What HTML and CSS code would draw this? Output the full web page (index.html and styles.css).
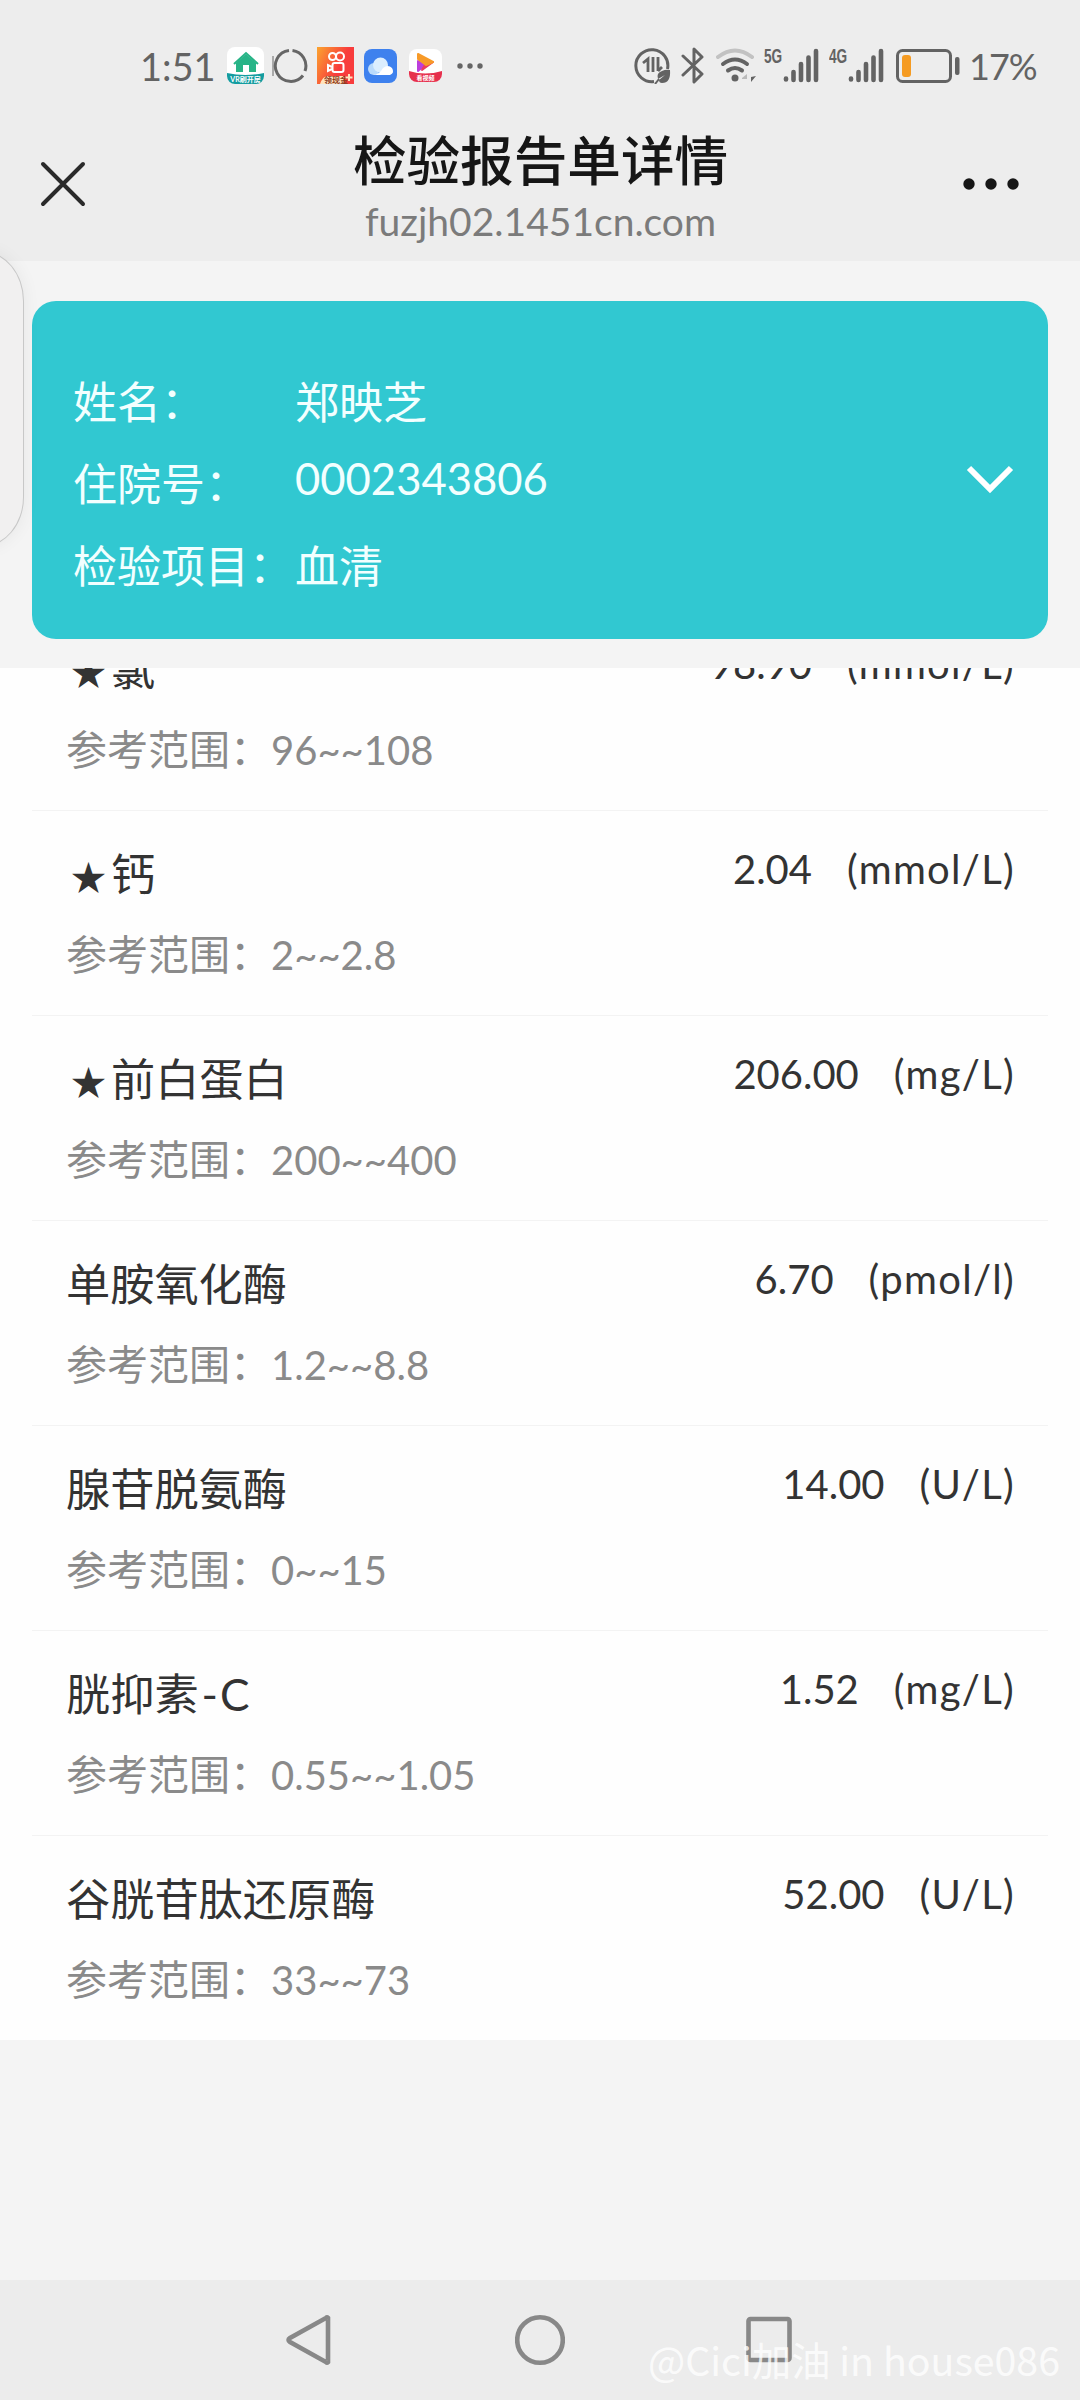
FILE: index.html
```html
<!DOCTYPE html>
<html lang="zh-CN">
<head>
    <meta charset="UTF-8">
    <meta name="viewport" content="width=device-width, initial-scale=1.0">
    <title>检验报告单详情</title>
    <link rel="stylesheet" href="styles.css">
</head>
<body>
    <div class="status-bar">
        <div class="status-left">
            <span class="time">1:51</span>
            <svg class="app-house" width="37" height="37" viewBox="0 0 37 37">
                <defs><clipPath id="house-clip"><rect width="37" height="37" rx="8"/></clipPath></defs>
                <g clip-path="url(#house-clip)">
                    <rect width="37" height="37" fill="#fff"/>
                    <path d="M0 26q18 4 37 0v11H0z" fill="#149c9f"/>
                    <path d="M9 16v9h7v-7h6v7h7v-9l-10-9z" fill="#28b487"/>
                    <path d="M7 17L19 6l12 11" fill="none" stroke="#28b487" stroke-width="2"/>
                    <text x="18.5" y="35" text-anchor="middle" class="icon-text house-text">VR刷开房</text>
                </g>
            </svg>
            <svg class="app-ring" width="36" height="36" viewBox="0 0 36 36" fill="none" stroke="#666" stroke-width="3">
                <path d="M1 8v20" stroke-width="1"/>
                <path d="M20.500 2.500A15.500 15.500 0 0 1 33 23M31 27.500A15.500 15.500 0 1 1 17 2.500"/>
            </svg>
            <svg class="app-video" width="37" height="37" viewBox="0 0 37 37">
                <defs><linearGradient id="orange" x1="0" y1="0" x2="1" y2="0.500"><stop offset="0" stop-color="#fba52f"/><stop offset="0.700" stop-color="#f83c3c"/></linearGradient></defs>
                <rect width="37" height="37" fill="url(#orange)"/>
                <g fill="none" stroke="#fff" stroke-width="2">
                    <circle cx="15.500" cy="9.500" r="3.500"/>
                    <circle cx="23" cy="9.500" r="4"/>
                    <rect x="15.500" y="16" width="11" height="9" rx="2"/>
                    <path d="M15 20l-4-2v6l4-2"/>
                </g>
                <path d="M3 37q3-9 9-8h15v8z" fill="#ffe2bd"/>
                <text x="19" y="36" text-anchor="middle" class="icon-text brown">领现金</text>
                <path d="M32 27v7M28.500 30.500h7" stroke="#ffe2bd" stroke-width="2"/>
            </svg>
            <svg class="app-cloud" width="33" height="34" viewBox="0 0 33 34">
                <rect width="33" height="34" rx="8" fill="#3e81ee"/>
                <circle cx="10" cy="20" r="6" fill="#b9dafc"/>
                <circle cx="16.500" cy="16" r="7.500" fill="#dceefe"/>
                <path d="M9 26q7-1 10-7 5-4 9 0 3 5-2 7z" fill="#fff"/>
            </svg>
            <svg class="app-play" width="33" height="33" viewBox="0 0 33 33">
                <defs><clipPath id="play-clip"><rect width="33" height="33" rx="8"/></clipPath></defs>
                <g clip-path="url(#play-clip)">
                    <rect width="33" height="33" fill="#fff"/>
                    <g stroke-width="2" stroke-linejoin="round">
                        <path d="M9 12v10l7-6z" fill="#bc3edc" stroke="#bc3edc"/>
                        <path d="M13 21l11-8-7 1z" fill="#ed3a60" stroke="#ed3a60"/>
                        <path d="M9 5v5l8 6 7-3z" fill="#f79a28" stroke="#f79a28"/>
                    </g>
                    <path d="M0 22q16 5 33 0v11H0z" fill="#e6304d"/>
                    <text x="16.500" y="31" text-anchor="middle" class="icon-text small">看视频</text>
                </g>
            </svg>
            <svg class="app-more" width="26" height="6" viewBox="0 0 26 6" fill="#666">
                <circle cx="3" cy="3" r="2.700"/><circle cx="13" cy="3" r="2.700"/><circle cx="23" cy="3" r="2.700"/>
            </svg>
        </div>
        <div class="status-right">
            <svg class="data-saver" width="37" height="37" viewBox="0 0 37 37">
                <path d="M20 34.500A16 16 0 1 1 33.500 22" fill="none" stroke="#636363" stroke-width="3"/>
                <path d="M9 16l5-4v13M19 10v15M24 10v14M24 24l4-4" fill="none" stroke="#636363" stroke-width="2.800"/>
                <path d="M36 23q1 13-8 13-3 0-3-3l6-5-7 4q-2-6 4-8 4-2 8-1z" fill="#636363"/>
                <path d="M21 37l4-5" stroke="#636363" stroke-width="2"/>
            </svg>
            <svg class="bluetooth" width="24" height="37" viewBox="0 0 24 37" fill="none" stroke="#636363" stroke-width="3" stroke-linejoin="round" stroke-linecap="round">
                <path d="M2 9l19 18-8 8V2l8 8L2 28"/>
            </svg>
            <svg class="wifi" width="40" height="35" viewBox="0 0 40 35" fill="none" stroke-width="4" stroke-linecap="round">
                <path d="M2 9q17-13 34 0" stroke="#c2c2c2"/>
                <path d="M7 16q12-9 24 0M12 22.500q7-5 14 0" stroke="#636363"/>
                <circle cx="19" cy="30" r="3.500" fill="#636363"/>
                <path d="M26 30l5-4v8v-3h-5z" fill="#bbb"/>
                <path d="M35 25v9l5-6-5 1z" fill="#636363"/>
            </svg>
            <span class="net">5G</span>
            <svg class="signal" width="36" height="35" viewBox="0 0 36 35" stroke="#636363" stroke-width="4.600" stroke-linecap="round">
                <path d="M3 30.500v1M10.500 24v8M18 16v16M25.500 9.500v22.500M33 3v29"/>
            </svg>
            <span class="net">4G</span>
            <svg class="signal" width="36" height="35" viewBox="0 0 36 35" stroke="#636363" stroke-width="4.600" stroke-linecap="round">
                <path d="M3 30.500v1M10.500 24v8M18 16v16M25.500 9.500v22.500M33 3v29"/>
            </svg>
            <svg class="battery" width="64" height="34" viewBox="0 0 64 34">
                <rect x="1.500" y="1.500" width="53" height="31" rx="5" fill="none" stroke="#636363" stroke-width="3"/>
                <rect x="6" y="6" width="9" height="22" rx="3" fill="#f59b22"/>
                <rect x="59" y="8" width="4.500" height="18" rx="2" fill="#636363"/>
            </svg>
            <span class="percent">17%</span>
        </div>
    </div>

    <header>
        <svg class="close" width="46" height="46" viewBox="0 0 46 46" stroke="#2a2a2a" stroke-width="4" stroke-linecap="round">
            <path d="M3 3l40 40M43 3L3 43"/>
        </svg>
        <div class="page-title">
            <h1>检验报告单详情</h1>
            <p>fuzjh02.1451cn.com</p>
        </div>
        <svg class="menu" width="56" height="12" viewBox="0 0 56 12" fill="#161616">
            <circle cx="6" cy="6" r="5.700"/><circle cx="28" cy="6" r="5.700"/><circle cx="50" cy="6" r="5.700"/>
        </svg>
    </header>

    <div class="patient-wrap">
        <div class="patient">
            <div class="patient-info">
                <div class="info-row"><span class="info-label">姓名：</span><span>郑映芝</span></div>
                <div class="info-row"><span class="info-label">住院号：</span><span class="number">0002343806</span></div>
                <div class="info-row"><span class="info-label">检验项目：</span><span>血清</span></div>
            </div>
            <svg class="arrow" width="48" height="30" viewBox="0 0 48 30" fill="none" stroke="#fff" stroke-width="6">
                <path d="M3 3l21 21L45 3"/>
            </svg>
        </div>
    </div>

    <div class="list">
        <div class="item">
            <div class="item-top"><span class="name"><i class="star">★</i>氯</span><span class="value">98.90</span><span class="unit">(mmol/L)</span></div>
            <div class="range"><span class="range-label">参考范围：</span>96~~108</div>
        </div>
        <div class="item">
            <div class="item-top"><span class="name"><i class="star">★</i>钙</span><span class="value">2.04</span><span class="unit">(mmol/L)</span></div>
            <div class="range"><span class="range-label">参考范围：</span>2~~2.8</div>
        </div>
        <div class="item">
            <div class="item-top"><span class="name"><i class="star">★</i>前白蛋白</span><span class="value">206.00</span><span class="unit">(mg/L)</span></div>
            <div class="range"><span class="range-label">参考范围：</span>200~~400</div>
        </div>
        <div class="item">
            <div class="item-top"><span class="name">单胺氧化酶</span><span class="value">6.70</span><span class="unit">(pmol/l)</span></div>
            <div class="range"><span class="range-label">参考范围：</span>1.2~~8.8</div>
        </div>
        <div class="item">
            <div class="item-top"><span class="name">腺苷脱氨酶</span><span class="value">14.00</span><span class="unit">(U/L)</span></div>
            <div class="range"><span class="range-label">参考范围：</span>0~~15</div>
        </div>
        <div class="item">
            <div class="item-top"><span class="name">胱抑素<span class="suffix">-C</span></span><span class="value">1.52</span><span class="unit">(mg/L)</span></div>
            <div class="range"><span class="range-label">参考范围：</span>0.55~~1.05</div>
        </div>
        <div class="item">
            <div class="item-top"><span class="name">谷胱苷肽还原酶</span><span class="value">52.00</span><span class="unit">(U/L)</span></div>
            <div class="range"><span class="range-label">参考范围：</span>33~~73</div>
        </div>
    </div>

    <nav class="nav-bar">
        <svg width="50" height="52" viewBox="0 0 50 52"><path d="M43 4v44q-1 1-2 0L5 28q-3-2 0-4L41 4q1-1 2 0z"/></svg>
        <svg width="50" height="52" viewBox="0 0 50 52"><circle cx="25" cy="26" r="22.800"/></svg>
        <svg width="50" height="52" viewBox="0 0 50 52"><rect x="3.500" y="5" width="41" height="41" rx="2"/></svg>
    </nav>

    <div class="side-panel"></div>
    <div class="watermark">@Cici加油 in house086</div>
</body>
</html>
```
FILE: styles.css
```css
* {
    box-sizing: border-box;
}
body {
    margin: 0;
    height: 2400px;
    display: flex;
    flex-direction: column;
    position: relative;
    overflow: hidden;
    background-color: #f4f4f4;
    font-family: Lato, "Noto Sans CJK SC", sans-serif;
}
svg {
    display: block;
    flex: none;
}

/* status bar */
.status-bar {
    height: 131px;
    padding: 0 43px 0 140px;
    display: flex;
    justify-content: space-between;
    background-color: #ededed;
    color: #636363;
}
.status-left,
.status-right {
    height: 131px;
    display: flex;
    align-items: center;
}
.time,
.percent {
    font-size: 38px;
    line-height: 40px;
    white-space: nowrap;
}
.time {
    width: 87px;
}
.percent {
    width: 68px;
    margin-left: 9px;
    font-size: 36px;
    letter-spacing: -1px;
}
.app-ring { margin-left: 8px; }
.app-video { margin-left: 9px; }
.app-cloud { margin-left: 10px; }
.app-play { margin-left: 12px; }
.app-more { margin-left: 15px; }
.icon-text {
    font-size: 8px;
    font-weight: bold;
    fill: #fff;
}
.house-text { font-size: 7px; }
.brown { fill: #8c3a20; }
.small { font-size: 6px; }
.bluetooth { margin-left: 10px; }
.wifi { margin-left: 11px; }
.net {
    width: 19px;
    margin-left: 8px;
    margin-bottom: 20px;
    font-family: "Liberation Sans", sans-serif;
    font-size: 21px;
    font-weight: bold;
    line-height: 20px;
    transform: scaleX(0.65);
    transform-origin: left center;
}
.signal + .net { margin-left: 10px; }
.battery { margin-left: 12px; }

/* title */
header {
    height: 130px;
    padding: 0 61px 0 40px;
    display: flex;
    justify-content: space-between;
    background-color: #ededed;
}
.close { margin-top: 30px; }
.menu { margin-top: 47px; }
.page-title {
    text-align: center;
    margin-left: 32px;
}
h1 {
    margin: 0;
    font-size: 53.6px;
    font-weight: 500;
    line-height: 58px;
    color: #161616;
}
.page-title p {
    margin: 7px 0 0;
    font-size: 39px;
    line-height: 50px;
    color: #7b7b7b;
}

/* patient card */
.patient-wrap {
    height: 407px;
    padding: 40px 32px 0;
}
.patient {
    height: 338px;
    padding: 0 34px 0 41px;
    display: flex;
    align-items: center;
    justify-content: space-between;
    border-radius: 24px;
    background-color: #31c8d1;
    color: #f2ffff;
}
.patient-info { padding-top: 27px; }
.info-row {
    height: 82px;
    display: flex;
    align-items: center;
    font-size: 44px;
    line-height: 60px;
}
.info-label { width: 222px; }
.number {
    margin-top: -11px;
    font-size: 43.6px;
}
.arrow { margin-top: 19px; }

/* results */
.list {
    height: 1372px;
    overflow: hidden;
    background-color: #fefefe;
}
.item {
    height: 205px;
    margin: 0 32px;
    padding: 33px 33px 0 34px;
    border-bottom: 1px solid #f3f3f3;
}
.item:first-child { margin-top: -62px; }
.item:last-child { border-bottom: none; }
.item-top {
    height: 60px;
    display: flex;
    color: #333;
    font-size: 40px;
    line-height: 51px;
}
.name {
    flex: 1;
    font-size: 44.2px;
    line-height: 60px;
}
.star {
    display: inline-block;
    width: 45px;
    font-size: 35px;
    font-style: normal;
    text-align: center;
    font-family: "Noto Sans CJK SC", sans-serif;
}
.suffix { margin-left: 3px; letter-spacing: 2px; }
.unit {
    margin-left: 35px;
    letter-spacing: 1.3px;
}
.range {
    margin-top: 23px;
    display: flex;
    align-items: center;
    color: #8a8a8a;
    font-size: 40px;
    line-height: 56px;
}
.range-label {
    width: 205px;
    font-size: 41px;
}

/* system navigation */
.nav-bar {
    height: 120px;
    margin-top: auto;
    padding: 0 285px;
    display: flex;
    align-items: center;
    justify-content: space-between;
    background-color: #ececec;
    fill: none;
    stroke: #888;
    stroke-width: 4.6;
}

.side-panel {
    position: absolute;
    left: -60px;
    top: 251px;
    width: 84px;
    height: 296px;
    border: 1px solid #c8c8c8;
    border-radius: 42px / 50px;
    background-color: #f1f0f0;
    box-shadow: 0 0 18px rgba(0, 0, 0, 0.06);
}
.watermark {
    position: absolute;
    right: 20px;
    bottom: 16px;
    font-family: "Noto Sans CJK SC", sans-serif;
    font-size: 39.3px;
    line-height: 50px;
    white-space: nowrap;
    color: rgba(255, 255, 255, 0.8);
}
```
